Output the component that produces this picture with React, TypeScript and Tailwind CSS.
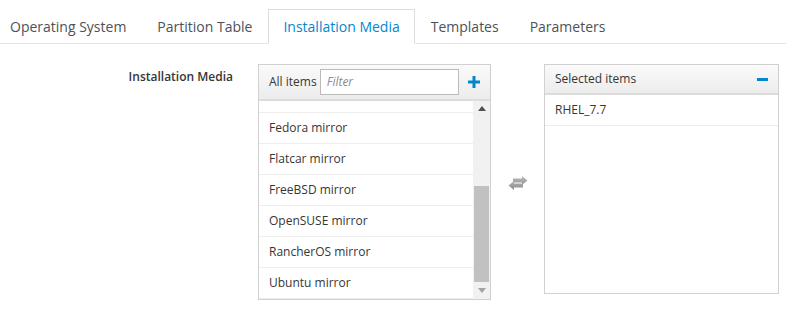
import React from "react";

const tabs = ["Operating System", "Partition Table", "Installation Media", "Templates", "Parameters"];
const items = ["Fedora mirror", "Flatcar mirror", "FreeBSD mirror", "OpenSUSE mirror", "RancherOS mirror", "Ubuntu mirror"];

function SwapIcon() {
  return (
    <svg width="20" height="14" viewBox="0 0 20 14">
      <defs>
        <linearGradient id="g" x1="0" y1="0" x2="0" y2="1">
          <stop offset="0" stopColor="#b5b5b5" />
          <stop offset="1" stopColor="#8a8a8a" />
        </linearGradient>
      </defs>
      <path d="M5 2.5 H14 V0 L19.5 4.5 L14 9 V6.5 H5 Z" fill="url(#g)" opacity="0.9" />
      <path d="M15 7.5 H6 V5 L0.5 9.5 L6 14 V11.5 H15 Z" fill="url(#g)" />
    </svg>
  );
}

export default function App() {
  return (
    <div className="w-[786px] h-[315px] bg-white overflow-hidden" style={{ fontFamily: '"Open Sans", sans-serif' }}>
      <div className="flex border-b border-[#e5e5e5] pt-[9px]">
        {tabs.map((t, i) => {
          const active = i === 2;
          return (
            <div
              key={t}
              className={`h-[35px] -mb-px flex items-center text-[14px] border ${i === 0 ? "pl-[9px] pr-[14.5px]" : "px-[14.5px]"} ${
                active ? "border-[#ddd] border-b-white bg-white text-[#0088ce]" : "border-transparent text-[#4d5258]"
              }`}
            >
              {t}
            </div>
          );
        })}
      </div>
      <div className="flex pt-[20px] text-[#363636]">
        <div className="w-[233px] text-right text-[12px] font-semibold pt-[4px]">Installation Media</div>
        <div className="ml-[25px] w-[233px] h-[236px] border border-[#d1d1d1] flex flex-col">
          <div className="h-[36px] flex items-center bg-gradient-to-b from-[#fafafa] to-[#ececec] border-b-2 border-[#dcdcdc] pl-[10px] pr-[10px] text-[12px]">
            <span>All items</span>
            <div className="ml-[3px] w-[139px] h-[26px] border border-[#bbb] bg-white flex items-center pl-[6px] text-[12px] italic text-[#8b8d8f]">
              Filter
            </div>
            <svg className="ml-auto" width="12" height="12" viewBox="0 0 12 12">
              <rect x="4.5" y="0" width="3" height="12" fill="#0088ce" />
              <rect x="0" y="4.5" width="12" height="3" fill="#0088ce" />
            </svg>
          </div>
          <div className="flex flex-1 min-h-0">
            <div className="flex-1 flex flex-col">
              <div className="h-[12px] border-b border-[#ededed]" />
              {items.map((it) => (
                <div key={it} className="h-[31px] border-b border-[#ededed] flex items-center pl-[10px] text-[12px]">
                  {it}
                </div>
              ))}
            </div>
            <div className="w-[17px] bg-[#f1f1f1] flex flex-col items-center">
              <svg className="mt-[5px]" width="8" height="5" viewBox="0 0 8 5">
                <path d="M0 5 L4 0 L8 5 Z" fill="#505050" />
              </svg>
              <div className="mt-[75px] w-[15px] h-[96px] bg-[#c1c1c1]" />
              <svg className="mt-[6px]" width="8" height="5" viewBox="0 0 8 5">
                <path d="M0 0 L8 0 L4 5 Z" fill="#a3a3a3" />
              </svg>
            </div>
          </div>
        </div>
        <div className="w-[53px] flex justify-center pt-[112px]">
          <SwapIcon />
        </div>
        <div className="w-[235px] h-[230px] border border-[#d1d1d1] flex flex-col">
          <div className="h-[30px] flex items-center bg-gradient-to-b from-[#fafafa] to-[#ececec] border-b-2 border-[#dcdcdc] pl-[10px] pr-[10px] text-[12px]">
            <span>Selected items</span>
            <div className="ml-auto w-[11px] h-[3px] bg-[#0088ce]" />
          </div>
          <div className="h-[31px] border-b border-[#ededed] flex items-center pl-[10px] text-[12px]">RHEL_7.7</div>
        </div>
      </div>
    </div>
  );
}
